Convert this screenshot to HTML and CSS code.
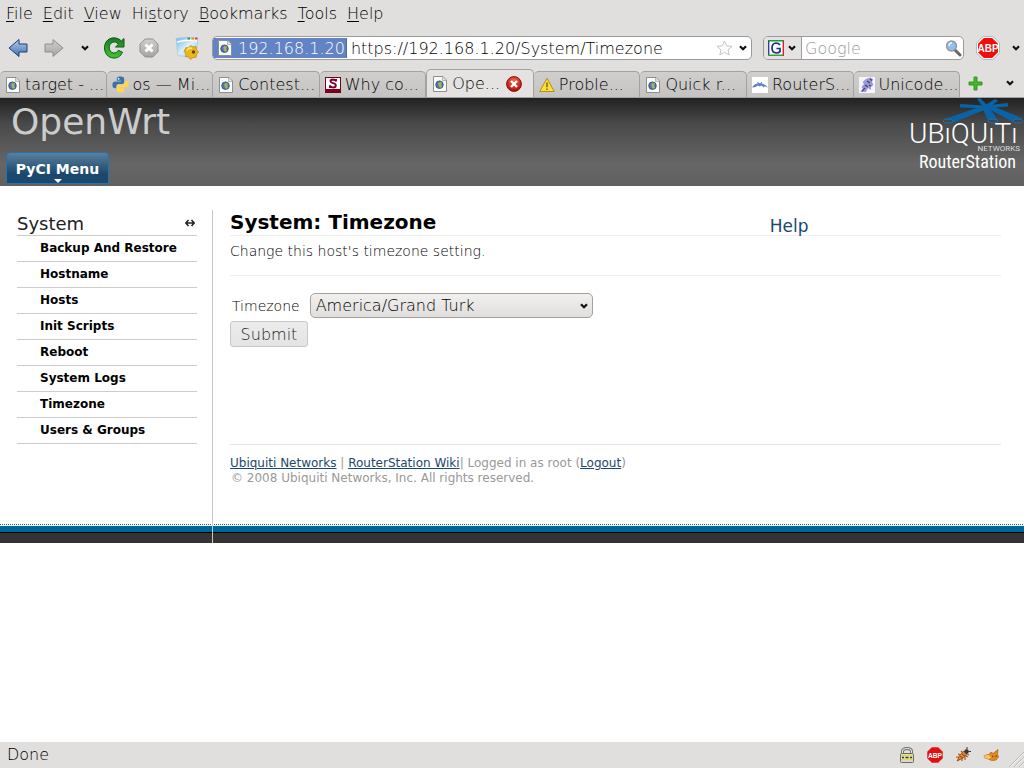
FILE: index.html
```html
<!DOCTYPE html>
<html lang="en">
<head>
<meta charset="utf-8">
<title>OpenWrt - System: Timezone</title>
<link rel="stylesheet" href="styles.css">
</head>
<body>
<svg class="defs" aria-hidden="true">
  <defs>
    <linearGradient id="blueG" x1="0" y1="0" x2="0" y2="1"><stop offset="0" stop-color="#b4cdec"/><stop offset="1" stop-color="#3f6fb3"/></linearGradient>
    <linearGradient id="greyG" x1="0" y1="0" x2="0" y2="1"><stop offset="0" stop-color="#cfcfcd"/><stop offset="1" stop-color="#a4a4a2"/></linearGradient>
    <linearGradient id="greenG" x1="0" y1="0" x2="0" y2="1"><stop offset="0" stop-color="#1c7a22"/><stop offset="1" stop-color="#45c52f"/></linearGradient>
    <linearGradient id="skyG" x1="0" y1="0" x2="1" y2="1"><stop offset="0" stop-color="#6db6ec"/><stop offset=".5" stop-color="#dff0fb"/><stop offset="1" stop-color="#7cc0ee"/></linearGradient>
    <radialGradient id="redG" cx=".5" cy=".3" r=".7"><stop offset="0" stop-color="#ee6a50"/><stop offset="1" stop-color="#b00c08"/></radialGradient>
  </defs>
  <symbol id="chev" viewBox="0 0 8 6"><path d="M1 1.2 4 4.2 7 1.2" fill="none" stroke="#111" stroke-width="2.2"/></symbol>
  <symbol id="page" viewBox="0 0 16 16"><path d="M1.500 .5H11L14.500 4V15.500H1.500z" fill="#fafafa" stroke="#8d8f8a"/><path d="M10.500 1V4.500H14" fill="#ddd" stroke="#aaa" stroke-width=".8"/><circle cx="7.500" cy="8.700" r="3.800" fill="#4f76a8" stroke="#2f4f7c" stroke-width=".8"/><path d="M6 7.500 8 5.800 10 6.800 9.200 9 10.200 10.500 8.500 12 7 10.500z" fill="#a3b25c"/></symbol>
</svg>

<div class="window">
<header class="chrome">
  <nav class="menubar" aria-label="Menu bar">
    <button><u>F</u>ile</button><button><u>E</u>dit</button><button><u>V</u>iew</button><button>Hi<u>s</u>tory</button><button><u>B</u>ookmarks</button><button><u>T</u>ools</button><button><u>H</u>elp</button>
  </nav>

  <div class="toolbar">
    <div class="nav-buttons">
      <button aria-label="Back"><svg width="20" height="20" viewBox="0 0 20 20"><path d="M1 10 11 1.500V6h8v8h-8v4.500z" fill="url(#blueG)" stroke="#1f3f73"/></svg></button>
      <button aria-label="Forward"><svg width="20" height="20" viewBox="0 0 20 20"><path d="M19 10 9 1.500V6H1v8h8v4.500z" fill="url(#greyG)" stroke="#8e8e8c"/></svg></button>
      <button class="narrow" aria-label="Recent pages"><svg width="8" height="6"><use href="#chev"/></svg></button>
      <button aria-label="Reload"><svg width="22" height="22" viewBox="0 0 22 22"><path d="M21 1.500V10h-8.500l3-2.700C13.500 5 11.500 4.700 9.800 5.200 4.500 7 5.500 15.500 10.500 16c2.500.2 3.800-1 4.800-2.700l4.200 2C17.500 19.500 14.500 21.200 10.500 21 -.5 20.500-1.500 4 8 1.300c3.500-1 7.500-.3 10.300 2.700z" fill="url(#greenG)" stroke="#0c5a14"/></svg></button>
      <button aria-label="Stop"><svg width="20" height="20" viewBox="0 0 20 20"><path d="M6.200 1h7.600L19 6.200v7.600L13.800 19H6.200L1 13.800V6.200z" fill="url(#greyG)" stroke="#8f8f8d"/><path d="M6.500 6.500l7 7m0-7-7 7" stroke="#fff" stroke-width="3"/></svg></button>
      <button class="patrol" aria-label="Certificates"><svg width="24" height="24" viewBox="0 0 24 24"><path d="M1 2.500Q12 0 23 2.500l-2 17Q11 22 3 19.500z" fill="url(#skyG)" stroke="#9bc4e0" stroke-width=".6"/><path d="M2 6q10-3 20-1" stroke="#fff" stroke-width="1.500" fill="none"/><path d="M12.500 2.500h2.500" stroke="#2aa336" stroke-width="2"/><path d="M16.500 2.500H19" stroke="#e08528" stroke-width="2"/><path d="M20 2.500h2.500" stroke="#e23c2b" stroke-width="2"/><path d="M9 15.500 11 11.500 13.500 12 15.500 9.500 18 11 21 10.500 21.500 13.500 23.500 16 21.500 18.500 21 21.500 18 21.500 15.500 23.500 13.500 21 10.500 20.500 11 18z" fill="#ecb61a" stroke="#b98708" stroke-width=".7"/><circle cx="18.500" cy="16" r="1.700" fill="#5f4606"/><path d="M12 14.500q2-3.500 5-2" stroke="#fce98a" stroke-width="1.500" fill="none"/></svg></button>
    </div>
    <form class="urlbar">
      <span class="identity"><svg width="16" height="16"><use href="#page"/></svg>192.168.1.20</span>
      <input type="text" aria-label="Address" value="https://192.168.1.20/System/Timezone">
      <svg width="17" height="16" viewBox="0 0 17 16"><path d="M8.500 1l2.200 4.800 5.300.6-4 3.500 1.200 5.100-4.700-2.600L3.800 15 5 9.900 1 6.400l5.300-.6z" fill="#fcfcfc" stroke="#c4c4c4"/></svg>
      <svg class="bar-chev" width="8" height="6"><use href="#chev"/></svg>
    </form>
    <form class="searchbar">
      <button type="button" class="engine" aria-label="Search engine"><svg width="16" height="16" viewBox="0 0 16 16"><path d="M0 0h16v16H0z" fill="#fff"/><path d="M0 .7h16" stroke="#169a3c" stroke-width="1.400"/><path d="M15.300 1v15" stroke="#d8232a" stroke-width="1.400"/><path d="M.7 1v15" stroke="#2741b5" stroke-width="1.400"/><path d="M0 15.300h15" stroke="#3c9e31" stroke-width="1.400"/><path d="M12 5Q10.500 3 8 3 4 3.300 4 8t4.200 5q2.500 0 3.800-1.300V8.500H8.500" stroke="#172f8d" stroke-width="1.700" fill="none"/></svg><svg width="8" height="6"><use href="#chev"/></svg></button>
      <input type="text" aria-label="Search" placeholder="Google">
      <svg width="18" height="18" viewBox="0 0 18 18"><path d="M11 11l5 5" stroke="#666" stroke-width="3" stroke-linecap="round"/><circle cx="7.500" cy="7" r="5" fill="#94bfec" stroke="#8b949d" stroke-width="1.300"/><path d="M5 7q0-3 3-3.200" stroke="#e9f4ff" stroke-width="1.600" fill="none"/></svg>
    </form>
    <button class="adblock" aria-label="Adblock Plus"><svg width="24" height="24" viewBox="0 0 24 24"><path d="M7.200.4h9.600l6.800 6.800v9.600l-6.800 6.800H7.200L.4 16.800V7.200z" fill="#fff" stroke="#999" stroke-width=".7"/><path d="M7.800 2h8.400L22 7.800v8.400L16.200 22H7.800L2 16.200V7.800z" fill="#f20d0d"/><text x="12" y="16" text-anchor="middle" class="abp-text">ABP</text></svg></button>
    <button class="more" aria-label="More"><svg width="8" height="6"><use href="#chev"/></svg></button>
  </div>

  <div class="tabs">
    <div class="tablist" role="tablist">
      <button role="tab"><svg width="16" height="16"><use href="#page"/></svg>target - ...</button>
      <button role="tab"><svg width="17" height="17" viewBox="0 0 16 16"><path d="M8 .5c-3 0-3.500 1-3.500 2.500v1.500H8.300v.7H3C1.200 5.200.4 6.500.4 8.500S1.300 11.500 3 11.500h1V9.800C4 8.500 5 7.500 6.200 7.500h3.500c1 0 1.800-.8 1.800-1.800V3C11.500 1.300 10.500.5 8 .5z" fill="#3b73a8"/><path d="M8 15.500c3 0 3.500-1 3.500-2.500v-1.500H7.700v-.7H13c1.800 0 2.600-1.300 2.600-3.300S14.700 4.500 13 4.500h-1v1.700c0 1.300-1 2.300-2.200 2.300H6.300c-1 0-1.800.8-1.800 1.800V13c0 1.700 1 2.500 3.500 2.500z" fill="#ffd748"/><circle cx="6.200" cy="2.700" r=".8" fill="#fff"/></svg>os — Mi...</button>
      <button role="tab"><svg width="16" height="16"><use href="#page"/></svg>Contest...</button>
      <button role="tab"><svg width="16" height="16" viewBox="0 0 16 16"><path d="M0 0h16v16H0z" fill="#7b0018"/><path d="M1 1h14v11H1z" fill="#fff"/><path d="M11 4.200Q10 2.500 7.800 2.500 5.500 2.700 5.500 4.200c0 2.300 5.300 1.500 5.300 4 0 1.800-1.500 2.300-2.800 2.300Q6 10.500 4.800 8.500M11 2v2.500M4.900 11V8.300" stroke="#7b0028" stroke-width="1.900" fill="none"/></svg>Why co...</button>
      <button role="tab" class="active" aria-selected="true"><svg width="16" height="16"><use href="#page"/></svg>Ope...<svg class="close" width="16" height="16" viewBox="0 0 16 16"><circle cx="8" cy="8" r="7.400" fill="url(#redG)" stroke="#8f0c08"/><path d="M5 5l6 6m0-6-6 6" stroke="#fff" stroke-width="2.400"/></svg></button>
      <button role="tab"><svg width="16" height="16" viewBox="0 0 16 16"><path d="M8 1.300 15.300 14.500H.7z" fill="#fbdf3f" stroke="#b58f12" stroke-linejoin="round"/><path d="M8 5.500v4.800m0 1.200v1.500" stroke="#6b5208" stroke-width="1.300"/></svg>Proble...</button>
      <button role="tab"><svg width="16" height="16"><use href="#page"/></svg>Quick r...</button>
      <button role="tab"><svg width="16" height="16" viewBox="0 0 16 16"><path d="M0 0h16v16H0z" fill="#fff"/><path d="M0 10.500Q2 6.500 7.500 6.300 13 6.500 16 10.500L12.500 9.300 12 10.500 9.500 8.500 7.500 9.500 6 8.500 3.500 10z" fill="#5b80c6"/><path d="M5.500 5l1.500 2M10 5 8.500 7" stroke="#5b80c6" fill="none"/></svg>RouterS...</button>
      <button role="tab"><svg width="16" height="16" viewBox="0 0 16 16"><path d="M0 0h16v16H0z" fill="#f4f4fb"/><path d="M7 2 11 .5 14 2 13 5 14.500 8 12 10V13L9 11 7 15H1L4 12 2.500 10 5 7 3.500 5z" fill="#9c99d4"/><path d="M11 2 13 3.500M8 4l3 2M6 8l3 2M10 8l2 1M3 14l3-3" stroke="#403b80" stroke-width="1.200"/></svg>Unicode...</button>
    </div>
    <button class="newtab" aria-label="New tab"><svg width="15" height="15" viewBox="0 0 15 15"><path d="M6 1h3v5h5v3H9v5H6V9H1V6h5z" fill="#46b62d" stroke="#2d9c1c"/></svg></button>
    <button class="alltabs" aria-label="All tabs"><svg width="8" height="6"><use href="#chev"/></svg></button>
  </div>
</header>

<div class="viewport">
  <header class="banner">
    <div class="brand">
      <div class="site-name">OpenWrt</div>
      <button class="pyci">PyCI Menu<svg width="8" height="4" viewBox="0 0 8 4"><path d="M0 0h8L4 4z" fill="#fff"/></svg></button>
    </div>
    <div class="logo">
      <svg class="burst" width="82" height="26" viewBox="0 0 82 26"><g fill="#0a63a6"><path d="M40 8 3 21Q1 25 10 25L45 11z"/><path d="M40 9 46 23Q51 26 56 22L46 8z"/><path d="M43 9 71 24Q80 26 80 20L48 7z"/><path d="M18 6 42 7.500 66 5V8.500L42 10.500 18 9.500z"/><path d="M35 1 38 0 46 8 42 10z"/><path d="M53 1 56 3 46 10 42 8z"/></g><g fill="#3f454b" stroke="#1d6fae"><ellipse cx="6" cy="23" rx="5" ry="2"/><ellipse cx="51" cy="23" rx="5" ry="2"/><ellipse cx="76" cy="23" rx="5" ry="2"/></g></svg>
      <div class="ubnt">UBıQUıTı</div>
      <div class="networks">NETWORKS</div>
      <div class="station">RouterStation</div>
    </div>
  </header>

  <div class="page">
    <aside class="sidebar">
      <div class="side-head"><h2>System</h2><svg width="10" height="8" viewBox="0 0 10 8"><path d="M1 4h8M3.500 1 .8 4l2.700 3M6.500 1l2.700 3-2.700 3" stroke="#222" stroke-width="1.600" fill="none"/></svg></div>
      <ul>
        <li><a href="#">Backup And Restore</a></li>
        <li><a href="#">Hostname</a></li>
        <li><a href="#">Hosts</a></li>
        <li><a href="#">Init Scripts</a></li>
        <li><a href="#">Reboot</a></li>
        <li><a href="#">System Logs</a></li>
        <li><a href="#">Timezone</a></li>
        <li><a href="#">Users &amp; Groups</a></li>
      </ul>
    </aside>
    <main class="content">
      <div class="title-row"><h1>System: Timezone</h1><a href="#">Help</a></div>
      <p class="intro">Change this host's timezone setting.</p>
      <form class="settings">
        <div class="field">
          <label for="tz">Timezone</label>
          <div class="select-wrap"><select id="tz"><option>America/Grand Turk</option></select><svg width="8" height="6"><use href="#chev"/></svg></div>
        </div>
        <button type="button" class="submit">Submit</button>
      </form>
      <footer class="foot">
        <div><a href="#">Ubiquiti Networks</a> | <a href="#">RouterStation Wiki</a>| Logged in as root (<a href="#">Logout</a>)</div>
        <div class="copy">© 2008 Ubiquiti Networks, Inc. All rights reserved.</div>
      </footer>
    </main>
  </div>
</div>

<footer class="statusbar">
  <span class="status">Done</span>
  <svg width="16" height="16" viewBox="0 0 16 16"><path d="M3.500 8V4.500Q3.500 1.500 8 1.500t4.500 3V8" fill="none" stroke="#6d6d6b" stroke-width="3"/><path d="M3.500 8V4.500Q3.500 1.500 8 1.500t4.500 3V8" fill="none" stroke="#e6e6e4" stroke-width="1.200"/><rect x="1.500" y="6.500" width="13" height="9" rx="1" fill="#d8d8d4" stroke="#6b6b66"/><path d="M2 8.500h12M2 12.500h12" stroke="#ead94a" stroke-width="1.400"/><path d="M3 10.500h2M6.500 10.500h3M11 10.500h2" stroke="#3e3e38" stroke-width="1.500"/></svg>
  <svg width="16" height="16" viewBox="0 0 24 24"><path d="M7.200.4h9.600l6.800 6.800v9.600l-6.800 6.800H7.200L.4 16.800V7.200z" fill="#e01010"/><text x="12" y="16" text-anchor="middle" class="abp-text">ABP</text></svg>
  <svg width="16" height="16" viewBox="0 0 16 16"><path d="M2 14l3-2M1 10l4 .5M3 7l4 1M7 14l0-3M10 13V9M13 10l-3-2M6 4l3 3M14 8l-3-2" stroke="#a15b22" stroke-width="1.200"/><path d="M2.500 13.500Q3 8 9 4l3 3Q9 12 2.500 13.500z" fill="#e08b3a" stroke="#8c4314" stroke-width=".7"/><path d="M5 9l3 2M7 7l3 2" stroke="#7a3a10" stroke-width=".9"/><circle cx="11.500" cy="4.500" r="2.300" fill="#3a352e"/><path d="M12 2.500V0M13.500 4.500H16" stroke="#333"/></svg>
  <svg width="17" height="16" viewBox="0 0 17 16"><path d="M1 8.500 6 7.500 8 5l2 1.500L15 2.500 14.500 7 15.500 10 13 13Q8 14.500 5.500 12L2 11z" fill="#e28a1b" stroke="#ae6110" stroke-width=".7"/><path d="M1 8.500 6 8l2 2.500-2 1.500-4-1z" fill="#f8c767"/><path d="M9 9l1.500 1M13.500 8.500l-1 1.500" stroke="#6d3507"/></svg>
  <svg class="grip" width="16" height="16" viewBox="0 0 16 16"><path d="M1 16 16 1M6 16 16 6M11 16l5-5" stroke="#b5b5b3"/><path d="M2 16 16 2M7 16l9-9M12 16l4-4" stroke="#fff" stroke-width=".7"/></svg>
</footer>
</div>
</body>
</html>
```
FILE: styles.css
```css
* { box-sizing: border-box; }
body { margin: 0; background: #fff; font-family: "DejaVu Sans", sans-serif; color: #333; }
button, input, select { font: inherit; color: inherit; margin: 0; padding: 0; border: 0; background: none; }
svg { flex: none; display: block; }
h1, h2, p, ul { margin: 0; padding: 0; }
.defs { position: absolute; width: 0; height: 0; }
.abp-text { font: bold 10px "Liberation Sans", sans-serif; fill: #fff; }

.window { min-height: 100vh; display: flex; flex-direction: column; }
.chrome, .statusbar { background: #e0dfdd; color: #000; font-size: 16px; font-weight: 200; }

.menubar { display: flex; gap: 10px; height: 28px; padding: 0 6px 2px; align-items: center; }
.menubar u { text-underline-offset: 2px; text-decoration-thickness: 1px; }

.toolbar { display: flex; height: 40px; align-items: center; }
.nav-buttons { display: flex; align-items: center; width: 212px; }
.nav-buttons button { width: 36px; display: flex; justify-content: center; }
.nav-buttons .narrow { width: 26px; }
.nav-buttons button:nth-child(4) { width: 32px; }
.nav-buttons button:nth-child(5) { width: 38px; }
.nav-buttons .patrol { width: 38px; }
.urlbar, .searchbar { display: flex; align-items: center; height: 24px; background: #fff; border: 1px solid #9c9b99; border-radius: 5px; overflow: hidden; }
.urlbar { flex: 1; padding-right: 4px; gap: 4px; }
.urlbar input { flex: 1; min-width: 0; }
.identity { display: flex; align-items: center; gap: 5px; height: 20px; padding: 0 1px 0 4px; background: #6284c4; color: #fff; border-right: 1px solid #4a6cac; }
.bar-chev { margin-left: 2px; }
.searchbar { width: 201px; margin-left: 11px; padding-right: 1px; }
.searchbar input { flex: 1; min-width: 0; padding-left: 3px; }
.searchbar input::placeholder { color: #999; opacity: 1; }
.engine { display: flex; align-items: center; gap: 4px; height: 22px; padding: 0 5px 0 4px; background: #e4e3e1; border-right: 1px solid #9c9b99; }
.adblock { margin-left: 12px; }
.more { margin: 0 4px 0 12px; }

.tabs { display: flex; height: 30px; align-items: flex-end; border-bottom: 1px solid #a3a29f; }
.tablist { display: flex; flex: 1; align-items: flex-end; }
.tablist button { flex: 1 1 0; min-width: 0; display: flex; align-items: center; gap: 4px; height: 26px; padding-left: 5px; white-space: nowrap; overflow: hidden; background: linear-gradient(#d0cfcd, #c4c3c1); border: 1px solid #a3a29f; border-bottom: 0; border-left-width: 0; border-radius: 5px 5px 0 0; }
.tablist .active { height: 28px; background: #e4e3e1; border-left-width: 1px; }
.close { margin-left: 2px; }
.newtab { width: 34px; padding: 0 0 6px 8px; }
.alltabs { width: 30px; padding: 0 0 11px 12px; }

.viewport { flex: 1; font-size: 13px; }
.banner { display: flex; justify-content: space-between; height: 88px; background: linear-gradient(#222, #4a4a4a 30%, #666 75%, #606060); overflow: hidden; }
.brand { padding-left: 6px; }
.site-name { height: 54px; padding-left: 5px; font-size: 36px; line-height: 48px; color: #ccc; }
.pyci { display: flex; flex-direction: column; align-items: center; width: 103px; height: 32px; padding-top: 8px; font-size: 14px; line-height: 17px; font-weight: bold; color: #fff; background: linear-gradient(#5a7f9d, #1b486e 70%); border: 1px solid #2b70a8; border-radius: 4px 4px 0 0; }
.pyci svg { margin-top: 1px; }
.logo { width: 115px; color: #fff; }
.burst { margin-left: 33px; }
.ubnt { margin-top: -2px; font: 300 28px/23px Roboto, sans-serif; white-space: nowrap; }
.networks { padding-right: 4px; text-align: right; font: 8px/8px Roboto, sans-serif; color: #ddd; }
.station { padding-left: 10px; font: 18px/18px "Roboto Condensed", "Liberation Sans Narrow", sans-serif; white-space: nowrap; }

.page { display: flex; padding-top: 24px; background: linear-gradient(#333, #333) bottom / 100% 10px no-repeat, linear-gradient(#000, #000) bottom 10px left / 100% 1px no-repeat, linear-gradient(#069, #069) bottom 11px left / 100% 6px no-repeat, linear-gradient(90deg, #069 50%, #fff 50%) bottom 18px left / 2px 1px repeat-x; }
.sidebar { width: 213px; padding: 0 15px 0 17px; border-right: 1px solid #c8c8c8; }
.side-head { display: flex; justify-content: space-between; align-items: center; height: 26px; padding-right: 2px; border-bottom: 1px solid #ccc; }
.side-head h2 { padding-top: 3px; font-size: 18px; line-height: 22px; font-weight: normal; color: #222; }
.sidebar ul { list-style: none; }
.sidebar li { height: 26px; padding-left: 23px; line-height: 25px; border-bottom: 1px solid #ccc; font-size: 12px; font-weight: bold; }
.sidebar a { color: #000; text-decoration: none; }

.content { flex: 1; padding: 0 23px 57px 17px; }
.title-row { display: grid; grid-template-columns: 70% 30%; height: 26px; border-bottom: 1px solid #eee; }
.title-row h1 { font-size: 20px; line-height: 24px; color: #000; white-space: nowrap; }
.title-row a { font-size: 17px; line-height: 32px; color: #1b486e; text-decoration: none; }
.intro { height: 40px; padding-top: 5px; border-bottom: 1px solid #eee; font-size: 14px; line-height: 20px; font-weight: 200; color: #000; }
.settings { padding-top: 17px; height: 168px; }
.field { display: flex; align-items: center; padding-left: 2px; gap: 10px; font-size: 14px; font-weight: 200; color: #000; }
.select-wrap { position: relative; width: 283px; }
.select-wrap select { appearance: none; display: block; width: 100%; height: 25px; padding: 0 24px 0 5px; font-size: 16px; background: linear-gradient(#f1f0ef, #e0dfdd); border: 1px solid #a3a29f; border-radius: 5px; }
.select-wrap svg { position: absolute; right: 5px; top: 10px; pointer-events: none; }
.submit { display: block; width: 78px; height: 26px; margin-top: 3px; font-size: 16px; font-weight: 200; color: #222; background: linear-gradient(#ececec, #e4e4e4); border: 1px solid #c8c8c8; border-radius: 3px; }
.foot { padding-top: 11px; border-top: 1px solid #e5e5e8; font-size: 12px; line-height: 15px; color: #999; }
.foot a { color: #1b486e; }
.copy { padding-left: 1px; }

.statusbar { display: flex; align-items: center; gap: 12px; height: 26px; padding: 0 0 1px 7px; }
.status { flex: 1; padding-bottom: 1px; }
.grip { align-self: flex-end; margin-left: -4px; }
```
